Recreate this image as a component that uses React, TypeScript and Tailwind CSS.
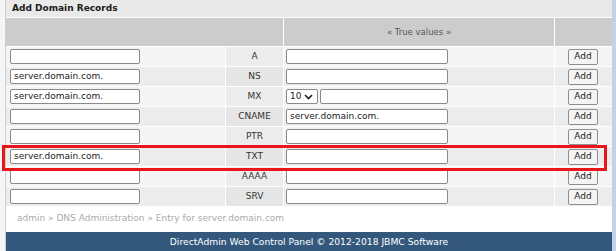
import React from "react";

const rows = [
  { left: "", type: "A", right: "", mx: false },
  { left: "server.domain.com.", type: "NS", right: "", mx: false },
  { left: "server.domain.com.", type: "MX", right: "", mx: true },
  { left: "", type: "CNAME", right: "server.domain.com.", mx: false },
  { left: "", type: "PTR", right: "", mx: false },
  { left: "server.domain.com.", type: "TXT", right: "", mx: false },
  { left: "", type: "AAAA", right: "", mx: false },
  { left: "", type: "SRV", right: "", mx: false },
];

function Input({ value, className }: { value: string; className: string }) {
  return (
    <div
      className={`h-[15px] bg-white border border-[#8a8a8a] rounded-[2px] text-[9px] leading-[13px] pl-[3px] text-[#222] overflow-hidden whitespace-nowrap ${className}`}
    >
      {value}
    </div>
  );
}

export default function App() {
  return (
    <div
      className="relative w-[616px] h-[251px] bg-[#f3f3f3] flex overflow-hidden"
      style={{ fontFamily: '"DejaVu Sans", Verdana, sans-serif' }}
    >
      <div className="w-[6px] border-r border-[#d0d0d0] bg-[#f5f5f5]" />
      <div className="w-[606px] flex flex-col bg-white">
        <div className="h-[18px] bg-[#e9e9e9] border-b border-white flex items-center pl-[6px] text-[9px] font-bold text-[#1a1a1a]">
          Add Domain Records
        </div>
        <div className="grid grid-cols-[219px_57px_270px_57px] gap-px bg-white">
          <div className="col-span-2 h-[28px] bg-[#cccccc]" />
          <div className="h-[28px] bg-[#cccccc] flex items-center justify-center text-[8.5px] text-[#555]">
            « True values »
          </div>
          <div className="h-[28px] bg-[#cccccc]" />
          {rows.map((r, i) => {
            const bg = i % 2 === 0 ? "bg-[#f4f4f4]" : "bg-[#ececec]";
            const bg2 = i % 2 === 0 ? "bg-[#ececec]" : "bg-[#e6e6e6]";
            return (
              <React.Fragment key={r.type}>
                <div className={`h-[19px] ${bg} flex items-center pl-[4px]`}>
                  <Input value={r.left} className="w-[130px]" />
                </div>
                <div
                  className={`h-[19px] ${bg2} flex items-center justify-center text-[9px] text-[#333]`}
                >
                  {r.type}
                </div>
                <div className={`h-[19px] ${bg} flex items-center pl-[2px]`}>
                  {r.mx ? (
                    <div className="flex items-center gap-[2px]">
                      <div className="w-[32px] h-[15px] bg-white border border-[#8a8a8a] rounded-[2px] flex items-center pl-[3px] text-[9px] text-[#222]">
                        10
                        <svg width="9" height="6" viewBox="0 0 9 6" className="ml-[3px]">
                          <path d="M1 1 L4.5 4.5 L8 1" stroke="#222" strokeWidth="1.6" fill="none" />
                        </svg>
                      </div>
                      <Input value="" className="w-[128px]" />
                    </div>
                  ) : (
                    <Input value={r.right} className="w-[162px]" />
                  )}
                </div>
                <div className={`h-[19px] ${bg} flex items-center pl-[13px]`}>
                  <div className="w-[30px] h-[16px] bg-[#f4f4f4] border border-[#8f8f8f] rounded-[2px] flex items-center justify-center text-[9px] text-[#222]">
                    Add
                  </div>
                </div>
              </React.Fragment>
            );
          })}
        </div>
        <div className="h-[26px] flex items-center pl-[11px] text-[9px] text-[#aaaaaa]">
          admin » DNS Administration » Entry for server.domain.com
        </div>
        <div className="flex-1 bg-[#33587c] flex items-center justify-center text-[9.2px] text-white">
          DirectAdmin Web Control Panel © 2012-2018 JBMC Software
        </div>
      </div>
      <div className="w-[4px] bg-[#c3d2e4]" />
      <div className="absolute left-[2px] top-[145px] w-[605px] h-[26px] border-[3px] border-[#e8151b] pointer-events-none" />
    </div>
  );
}
